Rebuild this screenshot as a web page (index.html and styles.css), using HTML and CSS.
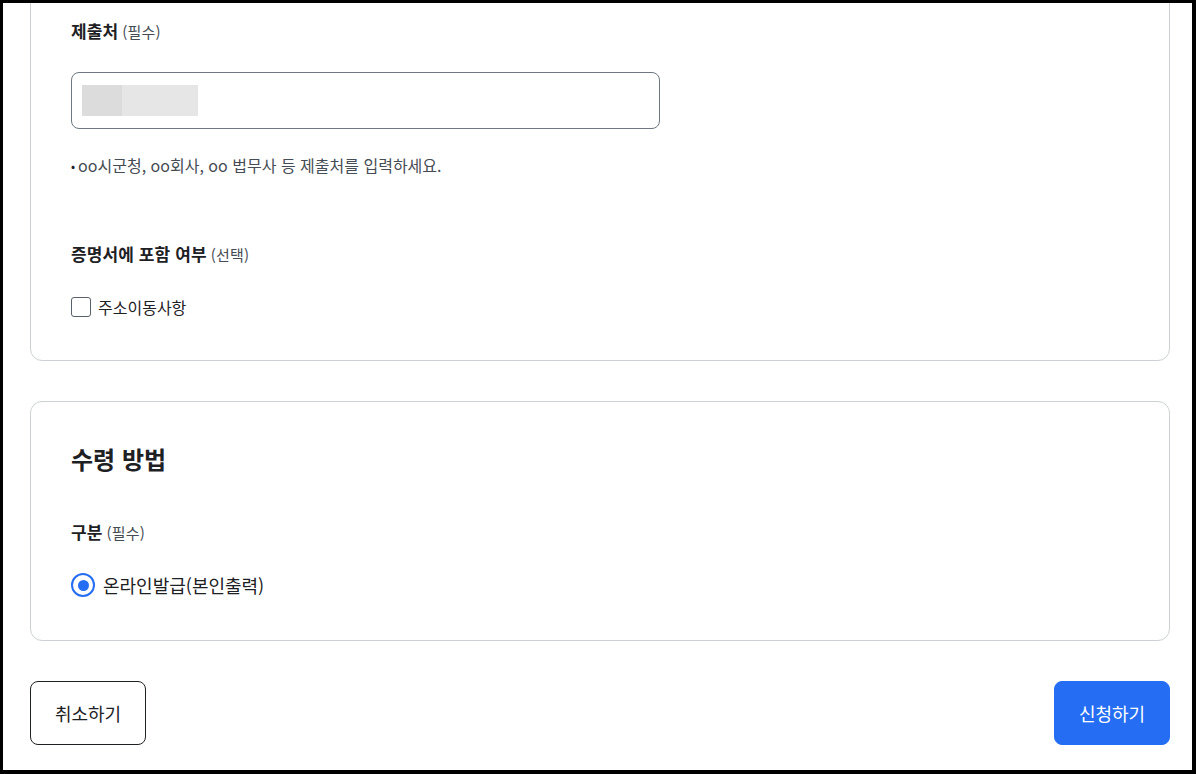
FILE: index.html
```html
<!DOCTYPE html>
<html lang="ko">
<head>
<meta charset="utf-8">
<title>증명서 신청</title>
<link rel="stylesheet" href="styles.css">
</head>
<body>
<div class="frame">
  <div class="page">
    <section class="card card-first">
      <div class="field">
        <div class="label"><strong>제출처</strong> <span class="note">(필수)</span></div>
        <div class="input"><span class="redact"></span></div>
        <p class="help"><span class="dot">•</span>oo시군청, oo회사, oo 법무사 등 제출처를 입력하세요.</p>
      </div>
      <div class="field field-gap">
        <div class="label"><strong>증명서에 포함 여부</strong> <span class="note">(선택)</span></div>
        <label class="check">
          <span class="box"></span>
          <span class="check-text">주소이동사항</span>
        </label>
      </div>
    </section>

    <section class="card card-second">
      <h2 class="title">수령 방법</h2>
      <div class="label label-sub"><strong>구분</strong> <span class="note">(필수)</span></div>
      <label class="radio">
        <span class="ring"><span class="fill"></span></span>
        <span class="radio-text">온라인발급(본인출력)</span>
      </label>
    </section>

    <div class="actions">
      <button class="btn btn-line" type="button">취소하기</button>
      <button class="btn btn-primary" type="button">신청하기</button>
    </div>
  </div>
</div>
</body>
</html>
```

FILE: styles.css
```css
html, body {
  margin: 0;
  padding: 0;
  background: #000;
}

body {
  font-family: "Noto Sans CJK KR", "Noto Sans", sans-serif;
  color: #1e2124;
}

.frame {
  margin: 3px 4px 4px 3px;
  height: 767px;
  background: #fff;
  overflow: hidden;
}

.page {
  padding: 0 22px 0 27px;
}

.card {
  border: 1px solid #cdd1d5;
  border-radius: 12px;
  padding: 0 40px;
}

.card-first {
  margin-top: -21px;
  padding-top: 36px;
  padding-bottom: 41px;
}

.card-second {
  margin-top: 40px;
  padding-top: 41px;
  padding-bottom: 43px;
}

.label {
  display: flex;
  align-items: baseline;
  gap: 4px;
  height: 24px;
  font-size: 17px;
  line-height: 24px;
  letter-spacing: 0.1px;
  color: #1e2124;
}

.label strong {
  font-weight: 700;
  line-height: 24px;
}

.note {
  font-size: 15px;
  line-height: 20px;
  color: #464c53;
  font-weight: 400;
  letter-spacing: 0.2px;
}

.input {
  box-sizing: border-box;
  margin-top: 29px;
  width: 589px;
  height: 57px;
  border: 1px solid #6d7882;
  border-radius: 8px;
  display: flex;
  align-items: center;
  padding-left: 10px;
}

.redact {
  width: 116px;
  height: 31px;
  background: linear-gradient(to right, #dcdcdc 0, #dcdcdc 40px, #e6e6e6 40px, #e6e6e6 100%);
}

.help {
  margin: 25px 0 0;
  height: 22px;
  font-size: 16px;
  line-height: 22px;
  color: #464c53;
  letter-spacing: 0;
}

.dot {
  font-size: 12px;
  line-height: 12px;
  margin-right: 3px;
  vertical-align: 1px;
  color: #1e2124;
}

.field-gap {
  margin-top: 66px;
}

.check {
  margin-top: 29px;
  display: flex;
  align-items: center;
  gap: 7px;
  height: 24px;
}

.box {
  width: 18px;
  height: 18px;
  border: 1px solid #58616a;
  border-radius: 3px;
  background: #fff;
}

.check-text {
  font-size: 16px;
  line-height: 24px;
  color: #1e2124;
}

.title {
  margin: 0;
  height: 32px;
  font-size: 24px;
  line-height: 32px;
  font-weight: 700;
  color: #1e2124;
}

.label-sub {
  margin-top: 45px;
}

.radio {
  margin-top: 29px;
  display: flex;
  align-items: center;
  gap: 8px;
  height: 24px;
}

.ring {
  width: 20px;
  height: 20px;
  border: 2px solid #256ef4;
  border-radius: 50%;
  display: flex;
  align-items: center;
  justify-content: center;
}

.fill {
  width: 11px;
  height: 11px;
  border-radius: 50%;
  background: #256ef4;
}

.radio-text {
  font-size: 18px;
  line-height: 24px;
  color: #1e2124;
}

.actions {
  margin-top: 40px;
  display: flex;
  justify-content: space-between;
}

.btn {
  width: 116px;
  height: 64px;
  border-radius: 8px;
  font-family: "Noto Sans CJK KR", "Noto Sans", sans-serif;
  font-size: 18px;
  cursor: pointer;
  padding: 0;
}

.btn-line {
  background: #fff;
  border: 1px solid #1e2124;
  color: #1e2124;
}

.btn-primary {
  background: #256ef4;
  border: 1px solid #256ef4;
  color: #fff;
}
```
